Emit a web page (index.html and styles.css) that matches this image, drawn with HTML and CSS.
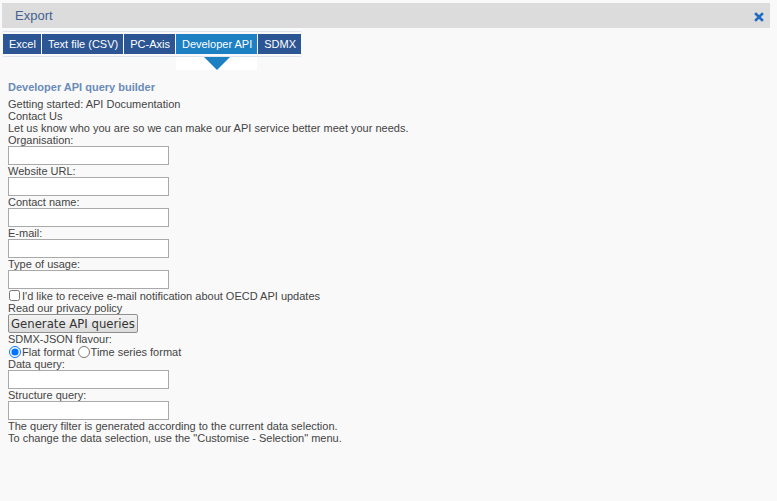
FILE: index.html
```html
<!DOCTYPE html>
<html>
<head>
  <title>Export</title>
  <link rel="stylesheet" href="styles.css">
</head>
<body>
  <div class="dialog">
    <div class="dialog-header">
      <span class="dialog-title">Export</span>
      <span class="dialog-close">
        <svg width="10" height="10" viewBox="0 0 10 10">
          <path d="M2 2 L8 8 M8 2 L2 8" stroke="#1f6cc4" stroke-width="2.6" stroke-linecap="square"/>
        </svg>
      </span>
    </div>

    <ul class="tabs">
      <li class="tab">Excel</li>
      <li class="tab">Text file (CSV)</li>
      <li class="tab">PC-Axis</li>
      <li class="tab active">Developer API</li>
      <li class="tab">SDMX</li>
    </ul>

    <div class="panel">
      <h3>Developer API query builder</h3>
      <div>Getting started: API Documentation</div>
      <div>Contact Us</div>
      <div>Let us know who you are so we can make our API service better meet your needs.</div>

      <form id="api-form">
        <label for="org">Organisation:</label>
        <input type="text" id="org">
        <label for="url">Website URL:</label>
        <input type="text" id="url">
        <label for="contact">Contact name:</label>
        <input type="text" id="contact">
        <label for="email">E-mail:</label>
        <input type="text" id="email">
        <label for="usage">Type of usage:</label>
        <input type="text" id="usage">

        <div class="check-row">
          <input type="checkbox" id="notify">
          <span>I'd like to receive e-mail notification about OECD API updates</span>
        </div>
        <div>Read our privacy policy</div>
        <button type="button" class="generate">Generate API queries</button>

        <div>SDMX-JSON flavour:</div>
        <div class="radio-row">
          <input type="radio" name="flavour" id="flat" checked>
          <span>Flat format</span>
          <input type="radio" name="flavour" id="series">
          <span>Time series format</span>
        </div>

        <label for="data-query">Data query:</label>
        <input type="text" id="data-query">
        <label for="structure-query">Structure query:</label>
        <input type="text" id="structure-query">
      </form>

      <div>The query filter is generated according to the current data selection.</div>
      <div>To change the data selection, use the "Customise - Selection" menu.</div>
    </div>
  </div>
</body>
</html>
```

FILE: styles.css
```css
body {
  margin: 0;
  background-color: #f9f9f9;
  font-family: "Liberation Sans", Arial, sans-serif;
  font-size: 11px;
  color: #444;
}

.dialog {
  width: 775px;
  height: 501px;
  padding-top: 3px;
  box-sizing: border-box;
}

.dialog-header {
  display: flex;
  align-items: center;
  justify-content: space-between;
  margin: 0 5px 0 2px;
  height: 25px;
  padding: 0 6px 0 13px;
  background-color: #dcdcdc;
}

.dialog-title {
  font-size: 13px;
  color: #44618f;
}

.dialog-close {
  display: flex;
  margin-top: 2px;
}

.tabs {
  display: flex;
  gap: 1px;
  list-style: none;
  width: fit-content;
  margin: 3px 0 0 3px;
  padding: 2px 0;
  border-top: 1px solid #dfe3ea;
  border-bottom: 1px solid #dfe3ea;
}

.tab {
  position: relative;
  height: 20px;
  line-height: 20px;
  padding: 0 5px 0 6px;
  background-color: #2c5593;
  color: #fff;
  font-size: 11px;
}

.tab.active {
  background-color: #1c80c3;
}

/* white strip with a pointer under the selected tab */
.tab.active::after {
  content: "";
  position: absolute;
  left: 0;
  right: 0;
  top: 23px;
  height: 13px;
  background-color: #fff;
}

.tab.active::before {
  content: "";
  position: absolute;
  top: 23px;
  left: 50%;
  margin-left: -13px;
  border-left: 13px solid transparent;
  border-right: 13px solid transparent;
  border-top: 13px solid #1c80c3;
  z-index: 1;
}

.panel {
  padding: 24px 8px 0;
  line-height: 12px;
}

.panel h3 {
  margin: 0 0 5px;
  font-size: 11px;
  font-weight: bold;
  color: #6a8bb8;
}

form {
  margin: 0;
}

label {
  display: block;
}

input[type="text"] {
  display: block;
  width: 161px;
  height: 19px;
  margin: 0;
  padding: 0;
  box-sizing: border-box;
  border: 1px solid #a9a9a9;
  background-color: #fff;
}

.check-row,
.radio-row {
  display: flex;
  align-items: center;
  height: 13px;
}

.check-row input {
  width: 11px;
  height: 11px;
  margin: 0 2px 0 1px;
}

.radio-row input {
  width: 12px;
  height: 12px;
  margin: 0 1px;
}

.radio-row span + input {
  margin-left: 3px;
}

.generate {
  display: block;
  height: 19px;
  margin: 0;
  padding: 0 2px;
  font-family: "DejaVu Sans", sans-serif;
  font-size: 11.7px;
  color: #333;
  border: 1px solid #8f8f8f;
  border-radius: 2px;
  background: linear-gradient(#f4f4f4, #dcdcdc);
}
```
